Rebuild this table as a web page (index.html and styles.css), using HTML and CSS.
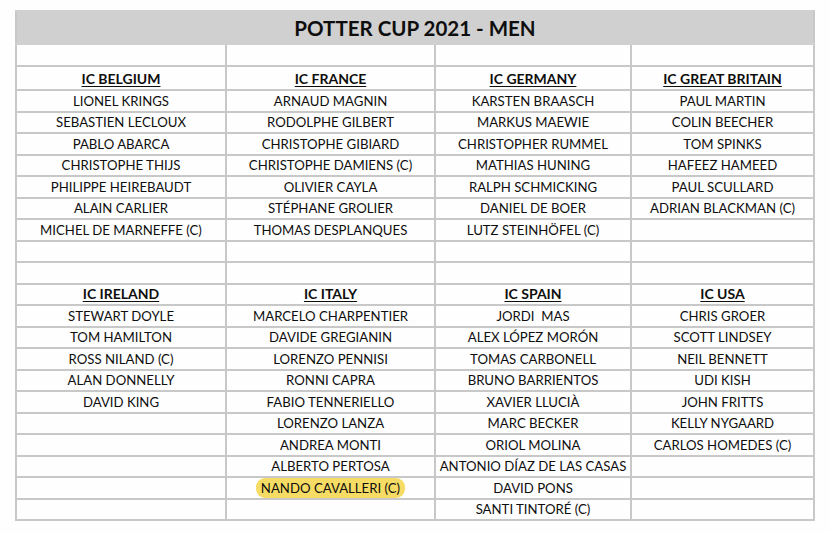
FILE: index.html
```html
<!DOCTYPE html>
<html>
<head>
<meta charset="utf-8">
<link rel="stylesheet" href="styles.css">
</head>
<body>
<table class="cup">
  <colgroup>
    <col class="c1"><col class="c2"><col class="c3"><col class="c4">
  </colgroup>
  <tr class="title-row"><td colspan="4" class="title">POTTER CUP 2021 - MEN</td></tr>
  <tr class="blank"><td></td><td></td><td></td><td></td></tr>
  <tr class="team first"><td><u>IC BELGIUM</u></td><td><u>IC FRANCE</u></td><td><u>IC GERMANY</u></td><td><u>IC GREAT BRITAIN</u></td></tr>
  <tr><td>LIONEL KRINGS</td><td>ARNAUD MAGNIN</td><td>KARSTEN BRAASCH</td><td>PAUL MARTIN</td></tr>
  <tr><td>SEBASTIEN LECLOUX</td><td>RODOLPHE GILBERT</td><td>MARKUS MAEWIE</td><td>COLIN BEECHER</td></tr>
  <tr><td>PABLO ABARCA</td><td>CHRISTOPHE GIBIARD</td><td>CHRISTOPHER RUMMEL</td><td>TOM SPINKS</td></tr>
  <tr><td>CHRISTOPHE THIJS</td><td>CHRISTOPHE DAMIENS (C)</td><td>MATHIAS HUNING</td><td>HAFEEZ HAMEED</td></tr>
  <tr><td>PHILIPPE HEIREBAUDT</td><td>OLIVIER CAYLA</td><td>RALPH SCHMICKING</td><td>PAUL SCULLARD</td></tr>
  <tr><td>ALAIN CARLIER</td><td>STÉPHANE GROLIER</td><td>DANIEL DE BOER</td><td>ADRIAN BLACKMAN (C)</td></tr>
  <tr><td>MICHEL DE MARNEFFE (C)</td><td>THOMAS DESPLANQUES</td><td>LUTZ STEINHÖFEL (C)</td><td></td></tr>
  <tr><td></td><td></td><td></td><td></td></tr>
  <tr><td></td><td></td><td></td><td></td></tr>
  <tr class="team"><td><u>IC IRELAND</u></td><td><u>IC ITALY</u></td><td><u>IC SPAIN</u></td><td><u>IC USA</u></td></tr>
  <tr><td>STEWART DOYLE</td><td>MARCELO CHARPENTIER</td><td>JORDI&nbsp; MAS</td><td>CHRIS GROER</td></tr>
  <tr><td>TOM HAMILTON</td><td>DAVIDE GREGIANIN</td><td>ALEX LÓPEZ MORÓN</td><td>SCOTT LINDSEY</td></tr>
  <tr><td>ROSS NILAND (C)</td><td>LORENZO PENNISI</td><td>TOMAS CARBONELL</td><td>NEIL BENNETT</td></tr>
  <tr><td>ALAN DONNELLY</td><td>RONNI CAPRA</td><td>BRUNO BARRIENTOS</td><td>UDI KISH</td></tr>
  <tr><td>DAVID KING</td><td>FABIO TENNERIELLO</td><td>XAVIER LLUCIÀ</td><td>JOHN FRITTS</td></tr>
  <tr><td></td><td>LORENZO LANZA</td><td>MARC BECKER</td><td>KELLY NYGAARD</td></tr>
  <tr><td></td><td>ANDREA MONTI</td><td>ORIOL MOLINA</td><td>CARLOS HOMEDES (C)</td></tr>
  <tr><td></td><td>ALBERTO PERTOSA</td><td>ANTONIO DÍAZ DE LAS CASAS</td><td></td></tr>
  <tr><td></td><td><span class="hl">NANDO CAVALLERI (C)</span></td><td>DAVID PONS</td><td></td></tr>
  <tr><td></td><td></td><td>SANTI TINTORÉ (C)</td><td></td></tr>
</table>
</body>
</html>
```
FILE: styles.css
```css
html, body {
  margin: 0;
  padding: 0;
  background: #fefefe;
}
body {
  padding: 10px 0 0 15px;
  font-family: Lato, "Open Sans", sans-serif;
  color: #0e0e0e;
}
.cup {
  border-collapse: collapse;
  table-layout: fixed;
  width: 798px;
}
.c1 { width: 210px; }
.c2 { width: 209px; }
.c3 { width: 196px; }
.c4 { width: 183px; }
.cup td {
  border: 2px solid #c8c8c8;
  text-align: center;
  font-size: 13.2px;
  height: 19.5px;
  padding: 0;
  line-height: 16px;
  white-space: nowrap;
}
.cup .title {
  background: #d0d0d0;
  height: 30px;
  font-size: 20.5px;
  font-weight: 700;
  border-color: #d0d0d0;
  border-left-color: #c8c8c8;
  border-right-color: #c8c8c8;
  padding-top: 1px;
}
.blank td { height: 20px; }
.team td {
  font-weight: 700;
  font-size: 14px;
}
.team.first td { height: 20px; padding-top: 2px; }
.team u {
  text-decoration-thickness: 1px;
  text-underline-offset: 2px;
}
.hl {
  background: #f6dc64;
  border-radius: 9px;
  padding: 2px 5px;
}
```
